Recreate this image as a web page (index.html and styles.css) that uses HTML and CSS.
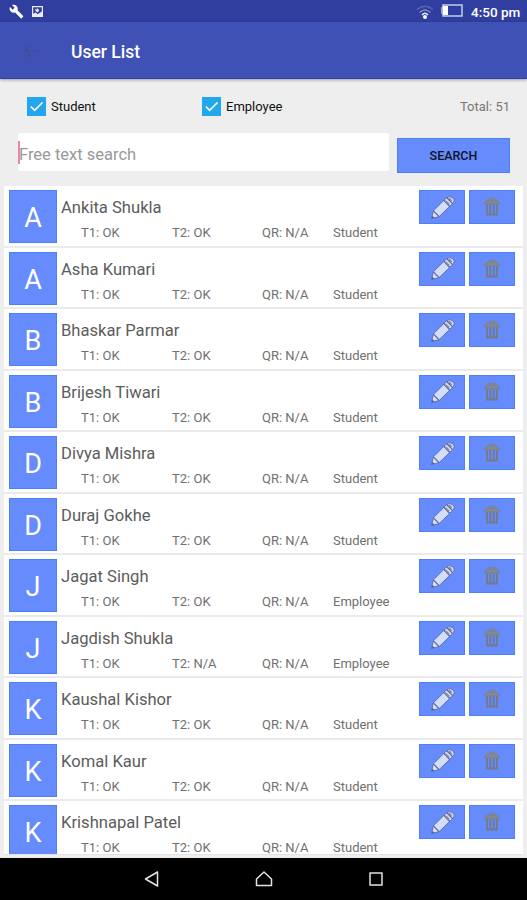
FILE: index.html
```html
<!DOCTYPE html>
<html lang="en">
<head>
<meta charset="utf-8">
<title>User List</title>
<link rel="stylesheet" href="styles.css">
</head>
<body>
<svg class="sprite" aria-hidden="true">
  <symbol id="pencil" viewBox="0 0 26 26">
    <path d="M1.500 24.500L3.500 16.500 17 3Q20 0 23.500 2.800T23 9.500L9.500 22.500Z" fill="#d3ddfa" stroke="#5d6ea8" stroke-width="1"/>
    <path d="M3.500 16.500L9.500 22.500M14.500 5.500L20.500 12M17.500 2.800L23.500 9" fill="none" stroke="#5a6698" stroke-width="1.300"/>
    <path d="M16 6L20 10M19.500 3L22.500 6" stroke="#858ba2" stroke-width="1.800"/>
    <path d="M1.500 24.500L2.300 21.500 4.700 23.700Z" fill="#526195"/>
  </symbol>
  <symbol id="trash" viewBox="0 0 18 20">
    <path d="M6.500 3.500V1.500h5v2M1.500 6.500L4 3.500H14L16.500 6.500Z" fill="#868b96" stroke="#7c8394" stroke-width="1.400"/>
    <path d="M4 7V17.500H14V7M7.300 7V17M10.700 7V17" fill="none" stroke="#737a89" stroke-width="1.800"/>
  </symbol>
</svg>
<div class="screen">
  <header class="status">
    <svg class="wrench" viewBox="0 0 24 24"><path fill="#fff" d="M22.700 19l-9.100-9.100c.9-2.300.4-5-1.500-6.900-2-2-5-2.400-7.400-1.300L9 6 6 9 1.600 4.700C.4 7.100.9 10.100 2.900 12.100c1.900 1.900 4.600 2.400 6.900 1.500l9.100 9.100c.4.400 1 .4 1.400 0l2.300-2.300c.5-.4.500-1.100.1-1.400z"/></svg>
    <svg class="image" viewBox="0 0 12 12"><path fill="#e8ebfa" fill-rule="evenodd" d="M0 0H12V12H0ZM1.300 1.300V8.500L4 7 6 9 10.700 6V1.300Z"/><path fill="#e8ebfa" d="M3 2.500L4.500 4 6 2.500 7.500 4V5.500L6 7 4 5.500Z"/></svg>
    <span class="spacer"></span>
    <svg class="wifi" viewBox="0 0 18 14"><g fill="none" stroke-width="1.400"><path stroke="#5966b4" d="M1 4.500Q9-2 17 4.500"/><path stroke="#7f8ac8" d="M3.500 7.500Q9 2.500 14.500 7.500"/><path stroke="#e2e6f6" d="M6 10Q9 6.500 12 10"/></g><circle cx="9" cy="12" r="2" fill="#fff"/></svg>
    <svg class="battery" viewBox="0 0 22 13"><path d="M2 1H21V12H2V9H1V4H2Z" fill="none" stroke="#c5ccec" stroke-width="1.500"/><path d="M2 2H7V11H2Z" fill="#fff"/></svg>
    <span class="clock">4:50 pm</span>
  </header>
  <div class="appbar">
    <svg class="back" viewBox="0 0 18 14"><path d="M17 7H2M7.500 1.500L2 7l5.500 5.500" fill="none" stroke="#434c91" stroke-width="1.200"/></svg>
    <h1>User List</h1>
  </div>
  <main>
    <div class="filters">
      <label class="check"><svg viewBox="0 0 19 19"><path fill="#20a7ee" d="M0 0H19V19H0Z"/><path d="M3.800 9.500L7.600 13.300 15.500 5.500" fill="none" stroke="#fff" stroke-width="1.700"/></svg><span>Student</span></label>
      <label class="check"><svg viewBox="0 0 19 19"><path fill="#20a7ee" d="M0 0H19V19H0Z"/><path d="M3.800 9.500L7.600 13.300 15.500 5.500" fill="none" stroke="#fff" stroke-width="1.700"/></svg><span>Employee</span></label>
      <span class="total">Total: 51</span>
    </div>
    <div class="search">
      <div class="field"><span>Free text search</span></div>
      <div class="button">SEARCH</div>
    </div>
    <ul class="list">
      <li><b>A</b><div class="info"><p>Ankita Shukla</p><div class="meta"><span>T1: OK</span><span>T2: OK</span><span>QR: N/A</span><span>Student</span></div></div><i><svg class="pen"><use href="#pencil"/></svg></i><i><svg class="bin"><use href="#trash"/></svg></i></li>
      <li><b>A</b><div class="info"><p>Asha Kumari</p><div class="meta"><span>T1: OK</span><span>T2: OK</span><span>QR: N/A</span><span>Student</span></div></div><i><svg class="pen"><use href="#pencil"/></svg></i><i><svg class="bin"><use href="#trash"/></svg></i></li>
      <li><b>B</b><div class="info"><p>Bhaskar Parmar</p><div class="meta"><span>T1: OK</span><span>T2: OK</span><span>QR: N/A</span><span>Student</span></div></div><i><svg class="pen"><use href="#pencil"/></svg></i><i><svg class="bin"><use href="#trash"/></svg></i></li>
      <li><b>B</b><div class="info"><p>Brijesh Tiwari</p><div class="meta"><span>T1: OK</span><span>T2: OK</span><span>QR: N/A</span><span>Student</span></div></div><i><svg class="pen"><use href="#pencil"/></svg></i><i><svg class="bin"><use href="#trash"/></svg></i></li>
      <li><b>D</b><div class="info"><p>Divya Mishra</p><div class="meta"><span>T1: OK</span><span>T2: OK</span><span>QR: N/A</span><span>Student</span></div></div><i><svg class="pen"><use href="#pencil"/></svg></i><i><svg class="bin"><use href="#trash"/></svg></i></li>
      <li><b>D</b><div class="info"><p>Duraj Gokhe</p><div class="meta"><span>T1: OK</span><span>T2: OK</span><span>QR: N/A</span><span>Student</span></div></div><i><svg class="pen"><use href="#pencil"/></svg></i><i><svg class="bin"><use href="#trash"/></svg></i></li>
      <li><b>J</b><div class="info"><p>Jagat Singh</p><div class="meta"><span>T1: OK</span><span>T2: OK</span><span>QR: N/A</span><span>Employee</span></div></div><i><svg class="pen"><use href="#pencil"/></svg></i><i><svg class="bin"><use href="#trash"/></svg></i></li>
      <li><b>J</b><div class="info"><p>Jagdish Shukla</p><div class="meta"><span>T1: OK</span><span>T2: N/A</span><span>QR: N/A</span><span>Employee</span></div></div><i><svg class="pen"><use href="#pencil"/></svg></i><i><svg class="bin"><use href="#trash"/></svg></i></li>
      <li><b>K</b><div class="info"><p>Kaushal Kishor</p><div class="meta"><span>T1: OK</span><span>T2: OK</span><span>QR: N/A</span><span>Student</span></div></div><i><svg class="pen"><use href="#pencil"/></svg></i><i><svg class="bin"><use href="#trash"/></svg></i></li>
      <li><b>K</b><div class="info"><p>Komal Kaur</p><div class="meta"><span>T1: OK</span><span>T2: OK</span><span>QR: N/A</span><span>Student</span></div></div><i><svg class="pen"><use href="#pencil"/></svg></i><i><svg class="bin"><use href="#trash"/></svg></i></li>
      <li><b>K</b><div class="info"><p>Krishnapal Patel</p><div class="meta"><span>T1: OK</span><span>T2: OK</span><span>QR: N/A</span><span>Student</span></div></div><i><svg class="pen"><use href="#pencil"/></svg></i><i><svg class="bin"><use href="#trash"/></svg></i></li>
    </ul>
  </main>
  <nav>
    <svg viewBox="0 0 18 18"><path d="M14.500 2V16L2.500 9Z"/></svg>
    <svg viewBox="0 0 18 18"><path d="M9 2L16.500 9V15.500H1.500V9Z"/></svg>
    <svg viewBox="0 0 18 18"><path d="M3 3H15V15H3Z"/></svg>
  </nav>
</div>
</body>
</html>
```
FILE: styles.css
```css
* { box-sizing: border-box; }
body { margin: 0; font-family: Roboto, "Liberation Sans", sans-serif; }
h1, p, ul { margin: 0; padding: 0; }
svg { display: block; flex: none; }
.sprite { display: none; }
.screen { display: flex; flex-direction: column; width: 527px; height: 900px; overflow: hidden; background: #eee; }

.status { display: flex; align-items: center; height: 22px; flex: none; padding: 1px 5px 0 9px; background: #303f9f; color: #fff; }
.wrench { width: 15px; height: 15px; }
.image { width: 11px; height: 11px; margin-left: 8px; }
.spacer { flex: 1; }
.wifi { width: 18px; height: 14px; }
.battery { width: 22px; height: 13px; margin: 0 8px 2px 7px; }
.clock { font-size: 13.5px; font-weight: 500; width: 51px; white-space: nowrap; }

.appbar { display: flex; align-items: center; height: 57px; flex: none; padding: 2px 0 0 23px; background: #3f51b5; border-bottom: 1px solid #3140a5; box-shadow: 0 1px 3px #0005; }
.back { width: 18px; height: 14px; margin-right: 30px; }
h1 { font-size: 17.5px; line-height: 22px; font-weight: 500; color: #fff; padding-top: 1px; }

main { display: flex; flex-direction: column; flex: 1; min-height: 0; }
.filters { display: grid; grid-template-columns: 175px 1fr auto; align-items: center; height: 54px; flex: none; padding: 0 17px 0 27px; }
.check { display: flex; align-items: center; gap: 5px; font-size: 13px; color: #111; }
.check svg { width: 19px; height: 19px; }
.total { font-size: 13px; color: #777; }

.search { display: flex; align-items: flex-start; height: 53px; flex: none; padding: 0 17px 0 18px; }
.field { width: 371px; height: 38px; background: #fff; border-radius: 2px; padding-top: 8px; }
.field span { display: block; height: 23px; border-left: 2px solid #e688ac; font-size: 16.5px; line-height: 27px; color: #999; text-indent: -1px; }
.button { width: 113px; height: 35px; margin: 5px 0 0 8px; border: 1px solid #4d7ffb; background: #658bfc; font-size: 12.5px; font-weight: 500; line-height: 33px; text-align: center; color: #10131e; }

.list { list-style: none; width: 519px; height: 669px; margin-left: 4px; border-bottom: 1px solid #e3e3e3; overflow: hidden; }
li { display: flex; align-items: flex-start; height: 61.5px; padding: 4px 8px 0 5px; background: #fff; border-bottom: 2px solid #ebebeb; }
li b { width: 48px; height: 53px; flex: none; border: 1px solid #4d7ffb; background: #658bfc; color: #fff; font-size: 27px; line-height: 54px; font-weight: 400; text-align: center; }
.info { width: 362px; flex: none; padding: 7px 0 0 4px; }
.info p { height: 28px; font-size: 16.6px; line-height: 22px; color: #5c5c5c; }
.meta { display: grid; grid-template-columns: 91px 90px 71px 1fr; padding-left: 20px; font-size: 13px; line-height: 16px; color: #707070; }
li i { display: flex; flex: none; align-items: center; justify-content: center; width: 46px; height: 34px; border: 1px solid #4d7ffb; background: #658bfc; }
li i + i { margin-left: 4px; }
.pen { width: 25px; height: 25px; }
.bin { width: 18px; height: 20px; }

nav { display: flex; align-items: center; justify-content: center; gap: 94px; height: 42px; flex: none; background: #000; }
nav svg { width: 18px; height: 18px; }
nav path { fill: none; stroke: #e4e4e4; stroke-width: 1.5; stroke-linejoin: round; }
```
